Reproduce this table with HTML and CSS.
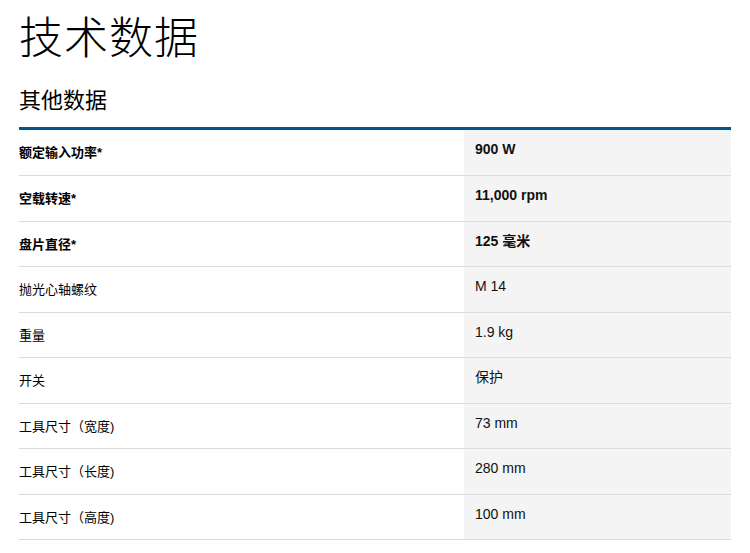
FILE: index.html
```html
<!DOCTYPE html>
<html lang="zh-CN">
<head>
<meta charset="utf-8">
<title>技术数据</title>
<link rel="stylesheet" href="styles.css">
</head>
<body>
<main class="page">
  <h1 class="title">技术数据</h1>
  <h2 class="subtitle">其他数据</h2>
  <table class="specs">
    <tbody>
      <tr class="key"><th>额定输入功率*</th><td>900 W</td></tr>
      <tr class="key"><th>空载转速*</th><td>11,000 rpm</td></tr>
      <tr class="key"><th>盘片直径*</th><td>125 毫米</td></tr>
      <tr><th>抛光心轴螺纹</th><td>M 14</td></tr>
      <tr><th>重量</th><td>1.9 kg</td></tr>
      <tr><th>开关</th><td>保护</td></tr>
      <tr><th>工具尺寸（宽度)</th><td>73 mm</td></tr>
      <tr><th>工具尺寸（长度)</th><td>280 mm</td></tr>
      <tr><th>工具尺寸（高度)</th><td>100 mm</td></tr>
    </tbody>
  </table>
</main>
</body>
</html>
```

FILE: styles.css
```css
html, body {
  margin: 0;
  padding: 0;
  background: #ffffff;
}

body {
  font-family: "Liberation Sans", Arial, "Noto Sans CJK SC", sans-serif;
  color: #000000;
}

.page {
  width: 712px;
  padding: 0 0 0 19px;
}

.title {
  margin: 0;
  padding-top: 5px;
  font-family: "Noto Sans CJK SC", sans-serif;
  font-size: 44px;
  font-weight: 300;
  line-height: 60px;
  letter-spacing: 1px;
}

.subtitle {
  margin: 0;
  padding-top: 18px;
  font-family: "Noto Sans CJK SC", sans-serif;
  font-size: 22px;
  font-weight: 400;
  line-height: 30px;
  box-sizing: border-box;
  border-bottom: 3px solid #005691;
  height: 65px;
}

.specs {
  width: 712px;
  border-collapse: collapse;
  border-spacing: 0;
  font-size: 13px;
  line-height: 18px;
}

.specs tr {
  border-bottom: 1px solid #dcdcdc;
}

.specs th,
.specs td {
  height: 45.5px;
  box-sizing: border-box;
  vertical-align: top;
  text-align: left;
  padding: 0;
}

.specs th {
  width: 445px;
  padding-top: 14px;
  font-weight: 400;
  font-family: "Liberation Sans", Arial, "Noto Sans CJK SC", sans-serif;
}

.specs td {
  background: #f4f4f4;
  padding-top: 10px;
  padding-left: 11px;
  font-size: 14px;
  color: #111111;
}

.specs tr.key th,
.specs tr.key td {
  font-weight: 700;
}
```
